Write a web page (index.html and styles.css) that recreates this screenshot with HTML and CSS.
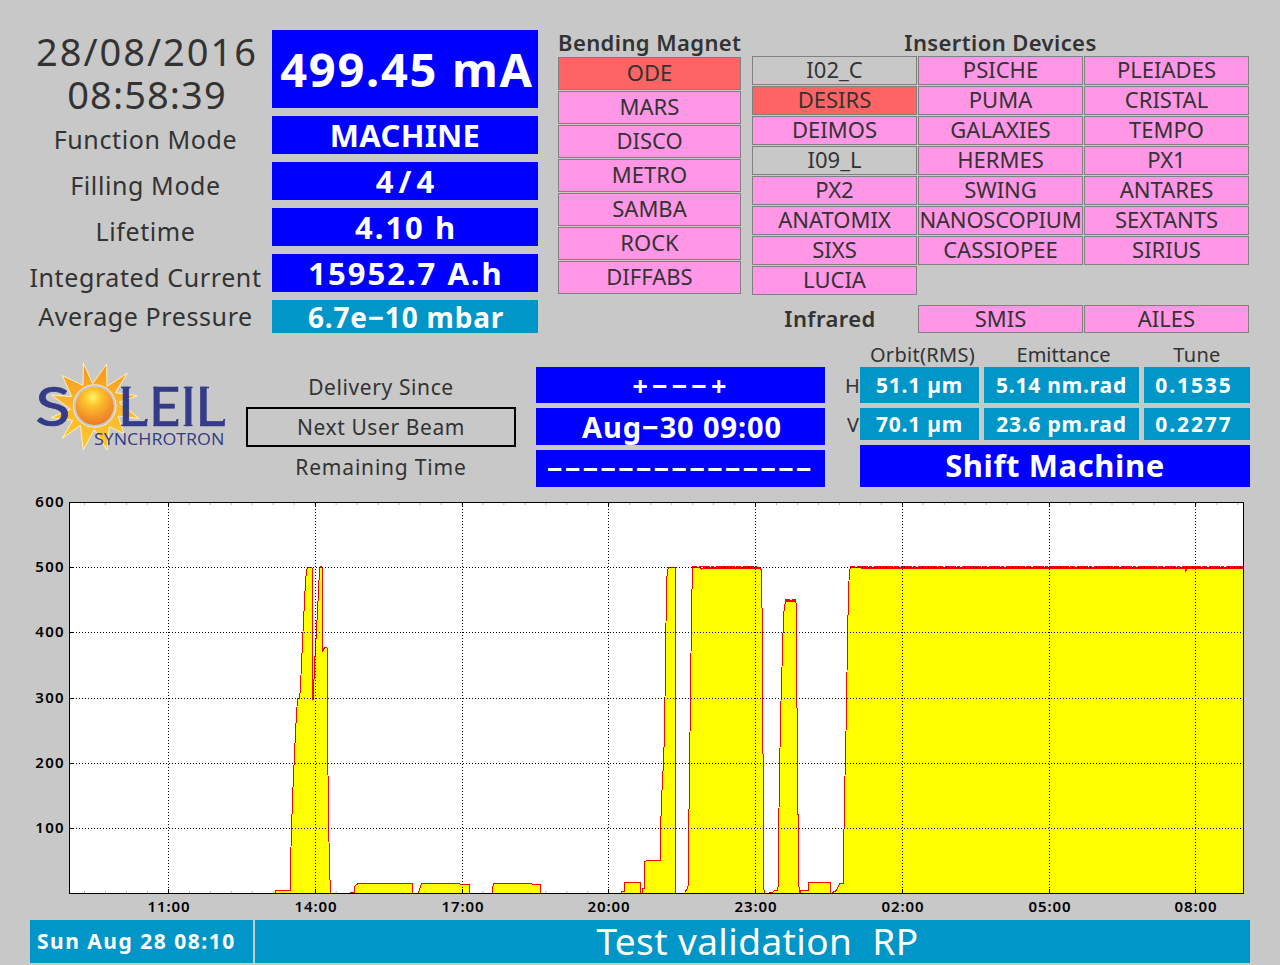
FILE: index.html
```
<!DOCTYPE html>
<html lang="en">
<head>
<meta charset="utf-8">
<title>SOLEIL Machine Status</title>
<link rel="stylesheet" href="styles.css">
</head>
<body>
<main class="panel">
  <section class="top">
    <div class="status">
      <div class="clock"><span>28/08/2016</span><span class="time">08:58:39</span></div><div class="val current">499.45 mA</div>
      <div class="lbl">Function Mode</div><div class="val machine">MACHINE</div>
      <div class="lbl">Filling Mode</div><div class="val filling">4/4</div>
      <div class="lbl">Lifetime</div><div class="val lifetime">4.10 h</div>
      <div class="lbl integrated">Integrated Current</div><div class="val lifetime">15952.7 A.h</div>
      <div class="lbl pressure">Average Pressure</div><div class="val teal mbar">6.7e−10 mbar</div>
    </div>
    <div class="bending">
      <h2>Bending Magnet</h2>
      <ul class="lines">
        <li class="red">ODE</li><li>MARS</li><li>DISCO</li><li>METRO</li><li>SAMBA</li><li>ROCK</li><li>DIFFABS</li>
      </ul>
    </div>
    <div class="insertion">
      <h2>Insertion Devices</h2>
      <ul class="devices">
        <li class="off">I02_C</li><li>PSICHE</li><li>PLEIADES</li>
        <li class="red">DESIRS</li><li>PUMA</li><li>CRISTAL</li>
        <li>DEIMOS</li><li>GALAXIES</li><li>TEMPO</li>
        <li class="off">I09_L</li><li>HERMES</li><li>PX1</li>
        <li>PX2</li><li>SWING</li><li>ANTARES</li>
        <li>ANATOMIX</li><li class="long">NANOSCOPIUM</li><li>SEXTANTS</li>
        <li>SIXS</li><li>CASSIOPEE</li><li>SIRIUS</li>
        <li>LUCIA</li>
      </ul>
      <div class="infrared"><h2>Infrared</h2><div class="cell">SMIS</div><div class="cell">AILES</div></div>
    </div>
  </section>

  <section class="middle">
    <svg class="logo" viewBox="0 0 660 330" role="img" aria-label="SOLEIL Synchrotron">
      <defs>
        <radialGradient id="ball" cx=".45" cy=".28" r=".72"><stop offset="0" stop-color="#fff56a"/><stop offset=".3" stop-color="#fdc42c"/><stop offset=".75" stop-color="#f3902a"/><stop offset="1" stop-color="#ee7d22"/></radialGradient>
        <linearGradient id="rays" x1="0" y1="0" x2="0" y2="1"><stop offset="0" stop-color="#f7941e"/><stop offset=".5" stop-color="#fdb92c"/><stop offset="1" stop-color="#fdc52d"/></linearGradient>
      </defs>
      <path fill="url(#rays)" stroke="#fff2b8" stroke-width="3" d="M175 38 203 101 245 42 246 109 307 70 271 128 337 137 282 157 342 205 279 198 297 251 253 230 246 300 208 238 175 300 166 226 112 265 143 211 78 203 136 178 80 135 140 140 112 77 174 106Z"/>
      <circle cx="209" cy="168" r="64" fill="#c8c8c8" stroke="#eeeada" stroke-width="3"/>
      <circle cx="209" cy="168" r="57" fill="url(#ball)"/>
      <g class="logo-name">
        <text x="31" y="227" textLength="106" lengthAdjust="spacingAndGlyphs">S</text>
        <text x="278" y="228" textLength="90" lengthAdjust="spacingAndGlyphs">L</text>
        <text x="372" y="228" textLength="94" lengthAdjust="spacingAndGlyphs">E</text>
        <text x="467" y="228" textLength="46" lengthAdjust="spacingAndGlyphs">I</text>
        <text x="511" y="228" textLength="90" lengthAdjust="spacingAndGlyphs">L</text>
      </g>
      <path fill="#343c87" d="M288 110h29v5h-29zM385 110h12v5h-12zM476 110h27v5h-27zM476 224h27v4h-27zM525 110h27v5h-27zM288 224h12v4h-12zM385 224h12v4h-12zM525 224h12v4h-12zM452 110h5l1 16-6-5zM455 207h6l-6 21h-9zM361 207h8l-8 21h-9zM596 207h5l-6 21h-9z"/>
      <text class="logo-sub" x="207" y="285" textLength="391" lengthAdjust="spacingAndGlyphs">SYNCHROTRON</text>
    </svg>
    <div class="delivery">
      <span>Delivery Since</span><span class="boxed">Next User Beam</span><span class="remaining">Remaining Time</span>
    </div>
    <div class="schedule">
      <div class="val since">+−−−+</div><div class="val next">Aug−30 09:00</div><div class="val dashes">−−−−−−−−−−−−−−−</div>
    </div>
    <div class="beam">
      <span></span><span class="head orbit">Orbit(RMS)</span><span class="head emit">Emittance</span><span class="head">Tune</span>
      <span class="axis">H</span><div class="val teal">51.1 µm</div><div class="val teal">5.14 nm.rad</div><div class="val teal tune">0.1535</div>
      <span class="axis vert">V</span><div class="val teal">70.1 µm</div><div class="val teal">23.6 pm.rad</div><div class="val teal tune">0.2277</div>
      <span></span><div class="val shift">Shift Machine</div>
    </div>
  </section>

  <svg class="chart" viewBox="30 497 1220 420" role="img" aria-label="Stored current over the last 24 hours">
    <defs>
      <pattern id="minor" x="84" y="0" width="20.97" height="2000" patternUnits="userSpaceOnUse"><rect width="1" height="2000" fill="#b4b4b4"/></pattern>
    </defs>
    <rect x="69" y="502" width="1175" height="392" fill="#fff"/>
    <path fill="url(#minor)" d="M84 503H1243V505H84ZM84 891H1243V893H84Z"/>
    <path class="trace" d="M275.5 893V890.5H290.5V864.5L291.5 829 292.5 800 293.5 775 294.5 755 295.5 732 296.5 715 297.5 698.5H299.5L300.5 687 301.5 663 302.5 643 303.5 621 304.5 601 305.5 582 306.5 570 307.5 567.5H311.5L312.5 569V699H313.5V695L314.5 664 315.5 649 316.5 629 317.5 611 318.5 591 319.5 570 320.5 566.5 322.5 567.5V651.5L324.5 647.5H326.5L327.5 649V733L328.5 816 329.5 867 330.5 893M349.5 892.5H354.5V886.5L356.5 884.5 358.5 883.5H412.5V893M417.5 892.5H418.5L421.5 883.5H459.5L460.5 884.5H469.5V893M492.5 893V888L493.5 883.5H531.5L532.5 884.5H540.5V893M621.5 892.5V891.5H624.5V882.5H640.5V893M642.5 893V888.5H644.5V861.5L647.5 860.5H660.5V829L661.5 804 662.5 777 663.5 766 664.5 729 665.5 665 666.5 582 667.5 570 668.5 567.5H675.5V893M684.5 892.5L686.5 890 688.5 885V850L689.5 770 690.5 695 691.5 612 692.5 567.5H700.5L701.5 569.5 703.5 567.5H757.5L761.5 570V606L762.5 610V752L763.5 756V886L764.5 893M768.5 892.5H772.5L774.5 890.5H777.5L778.5 883V841L779.5 775 780.5 721 781.5 681 782.5 653 783.5 614 785.5 600.5H794.5L796.5 604V700L797.5 716V813L798.5 816V880L799.5 893M800.5 893V890.5H808.5V882.5H830.5V893M832.5 892.5L836.5 890.5 839.5 883.5H843.5V865L844.5 794 845.5 758 846.5 705 847.5 639 848.5 592 849.5 570 850.5 567.5H1184.5L1185.5 571 1187.5 568.5H1243.5V893"/>
    <path class="band" d="M703 568H761M785 601H796M861 568H1243"/>
    <path class="ripple" d="M692 566.5H757M850 566.5H1243M785 599.5H796"/>
    <path class="grid" d="M70 567.5H1243M70 632.5H1243M70 698.5H1243M70 763.5H1243M70 828.5H1243M168.5 503V893M315.5 503V893M462.5 503V893M608.5 503V893M755.5 503V893M902.5 503V893M1049.5 503V893M1195.5 503V893"/>
    <path class="frame" d="M69.5 502.5H1243.5V893.5H69.5ZM69 567.5h5M69 632.5h5M69 698.5h5M69 763.5h5M69 828.5h5M168.5 889v4M315.5 889v4M462.5 889v4M608.5 889v4M755.5 889v4M902.5 889v4M1049.5 889v4M1195.5 889v4M168.5 503v3M315.5 503v3M462.5 503v3M608.5 503v3M755.5 503v3M902.5 503v3M1049.5 503v3M1195.5 503v3"/>
    <g class="ylab">
      <text x="65" y="507">600</text><text x="65" y="572">500</text><text x="65" y="637">400</text><text x="65" y="703">300</text><text x="65" y="768">200</text><text x="65" y="833">100</text>
    </g>
    <g class="xlab">
      <text x="169" y="912">11:00</text><text x="316" y="912">14:00</text><text x="463" y="912">17:00</text><text x="609" y="912">20:00</text><text x="756" y="912">23:00</text><text x="903" y="912">02:00</text><text x="1050" y="912">05:00</text><text x="1196" y="912">08:00</text>
    </g>
  </svg>

  <footer class="message"><div class="stamp">Sun Aug 28 08:10</div><div class="text">Test validation&nbsp; RP</div></footer>
</main>
</body>
</html>
```
FILE: styles.css
```
* { box-sizing: border-box; }
body { margin: 0; width: 1280px; height: 965px; overflow: hidden; background: #c8c8c8; color: #333; font-family: "Noto Sans", "Open Sans", sans-serif; }
.panel { display: flex; flex-direction: column; height: 965px; padding: 30px 30px 0; }
h2 { margin: 0; padding-bottom: 2px; font-size: 22px; font-weight: 600; line-height: 25px; text-align: center; white-space: nowrap; letter-spacing: .4px; }
ul { list-style: none; margin: 0; padding: 0; }

.top { display: flex; height: 315px; }
.status { display: grid; width: 508px; grid-template-columns: 230px 266px; grid-template-rows: 78px repeat(4, 38px) 33px; gap: 8px 12px; align-content: start; }
.clock { display: flex; flex-direction: column; align-items: center; font-size: 38px; line-height: 43px; letter-spacing: 2px; padding-left: 4px; }
.time { letter-spacing: 1.1px; }
.lbl { display: flex; align-items: center; justify-content: center; white-space: nowrap; font-size: 25px; letter-spacing: .6px; padding: 8px 0 0 1px; }
.pressure { padding-top: 0; padding-bottom: 1px; }
.val { display: flex; align-items: center; justify-content: center; white-space: nowrap; background: #00f; color: #fff; font-size: 31px; font-weight: 700; line-height: 1; letter-spacing: 1px; }
.current { font-size: 47px; letter-spacing: 1.7px; padding-left: 4px; }
.machine { letter-spacing: .3px; }
.filling { letter-spacing: 5px; padding-left: 5px; }
.lifetime { letter-spacing: 2px; padding-left: 2px; }
.teal { background: #0096c8; }
.mbar { font-size: 28px; letter-spacing: .8px; padding-left: 2px; }

.bending { width: 183px; margin-left: 20px; }
.lines { display: grid; grid-auto-rows: 33px; gap: 1px; }
li, .cell { display: flex; align-items: center; justify-content: center; background: #ff96e6; border: 1px solid #808080; padding-bottom: 3px; font-size: 22px; line-height: 1; white-space: nowrap; }
.cell { padding-bottom: 2px; }
.long { letter-spacing: -.2px; }
.red { background: #ff6464; }
.off { background: #c8c8c8; }
.insertion { width: 497px; margin-left: 11px; }
.insertion > h2 { padding-bottom: 1px; }
.devices { display: grid; grid-template-columns: repeat(3, 165px); grid-auto-rows: 29px; gap: 1px; }
.infrared { display: grid; grid-template-columns: repeat(3, 165px); grid-auto-rows: 28px; gap: 1px; margin-top: 10px; }
.infrared h2 { padding-right: 9px; line-height: 27px; }

.middle { display: flex; height: 152px; }
.middle > * { flex: none; }
.logo { width: 220px; height: 110px; margin: 5px 0 0 -5px; }
.logo-name { font-family: Lato, sans-serif; font-size: 163px; fill: #343c87; stroke: #343c87; stroke-width: 2; }
.logo-sub { font-family: "Open Sans", sans-serif; font-size: 50px; font-weight: 500; fill: #343c87; }
.delivery { display: flex; flex-direction: column; width: 270px; margin: 22px 0 0 1px; text-align: center; font-size: 21px; line-height: 40px; letter-spacing: .6px; }
.remaining { letter-spacing: .8px; }
.boxed { height: 40px; line-height: 36px; border: 2px solid #000; }
.schedule { display: grid; width: 289px; margin: 22px 0 0 20px; grid-template-rows: 36px 37px 37px; gap: 5px; align-content: start; }
.next { font-size: 29px; letter-spacing: .9px; padding-left: 3px; }
.since, .dashes { font-size: 27px; }
.since { letter-spacing: 4px; padding-left: 2px; }
.dashes { letter-spacing: 2.1px; }
.beam { display: grid; margin-left: 19px; grid-template-columns: 11px 119px 155px 106px; grid-template-rows: 17px 36px 32px 42px; gap: 5px 5px; align-content: start; }
.beam .val { font-size: 21px; letter-spacing: .8px; }
.beam .head { font-size: 20px; line-height: 20px; text-align: center; letter-spacing: .3px; }
.beam .orbit { padding-left: 6px; }
.beam .emit { padding-left: 4px; letter-spacing: 0; }
.beam .axis { font-size: 20px; line-height: 38px; margin-left: 1px; }
.beam .vert { margin: -2px 0 0 3px; }
.beam .tune { padding-right: 6px; letter-spacing: 1.9px; }
.beam .shift { grid-column: 2 / 5; padding-bottom: 2px; font-size: 31px; letter-spacing: .6px; }

.chart { width: 1220px; height: 420px; flex: none; overflow: hidden; }
.trace { fill: #ff0; stroke: #f00; stroke-width: 1; shape-rendering: crispEdges; }
.band { stroke: #f00; stroke-width: 2; shape-rendering: crispEdges; }
.ripple { stroke: #f00; stroke-width: 1; stroke-dasharray: 5 2 11 1 3 2 19 1; shape-rendering: crispEdges; }
.grid { stroke: #000; stroke-dasharray: 1 2; shape-rendering: crispEdges; }
.frame { fill: none; stroke: #000; shape-rendering: crispEdges; }
.ylab, .xlab { font-size: 15px; font-weight: 600; fill: #000; letter-spacing: .9px; }
.ylab { text-anchor: end; letter-spacing: 1.3px; }
.xlab { text-anchor: middle; }

.message { display: flex; gap: 2px; height: 43px; margin-top: 3px; color: #fff; white-space: nowrap; }
.stamp, .text { display: flex; align-items: center; background: #0096c8; line-height: 1; }
.stamp { width: 223px; padding-left: 7px; font-size: 21px; font-weight: 700; letter-spacing: 1.5px; }
.text { flex: 1; justify-content: center; padding: 0 0 2px 10px; font-size: 37px; letter-spacing: .4px; }
```
